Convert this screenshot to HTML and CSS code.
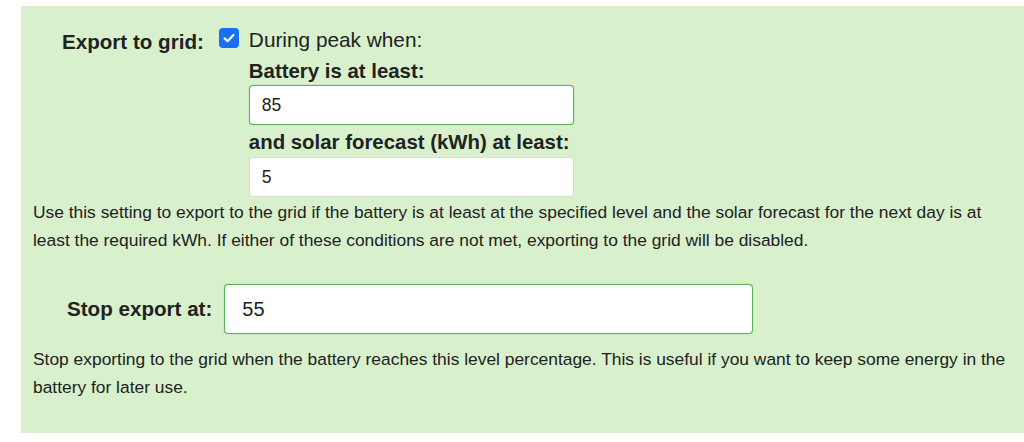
FILE: index.html
```html
<!DOCTYPE html>
<html>
<head>
<meta charset="utf-8">
<link rel="stylesheet" href="styles.css">
</head>
<body>
<div class="panel">
  <div class="row row-export">
    <label class="lbl lbl-export">Export to grid:</label>
    <span class="check">
      <svg viewBox="0 0 20 20" width="20" height="20"><rect x="0" y="0" width="20" height="20" rx="4" fill="#1a6ff2"/><path d="M5.6 10.4 L8.6 13.2 L14.4 7" fill="none" stroke="#fff" stroke-width="2.2" stroke-linecap="round" stroke-linejoin="round"/></svg>
    </span>
    <div class="col">
      <div class="plain">During peak when:</div>
      <div class="sub">Battery is at least:</div>
      <div class="input focus w1">85</div>
      <div class="sub sub2">and solar forecast (kWh) at least:</div>
      <div class="input w1 h2">5</div>
    </div>
  </div>
  <p class="help">Use this setting to export to the grid if the battery is at least at the specified level and the solar forecast for the next day is at least the required kWh. If either of these conditions are not met, exporting to the grid will be disabled.</p>
  <div class="row row-stop">
    <label class="lbl lbl-stop">Stop export at:</label>
    <div class="input focus big">55</div>
  </div>
  <p class="help help2">Stop exporting to the grid when the battery reaches this level percentage. This is useful if you want to keep some energy in the battery for later use.</p>
</div>
</body>
</html>
```
FILE: styles.css
```css
html, body {
  margin: 0;
  padding: 0;
  background: #ffffff;
  overflow: hidden;
}
body {
  font-family: "Liberation Sans", Arial, Helvetica, sans-serif;
  color: #222;
  width: 1024px;
  height: 442px;
}
.panel {
  margin: 6px 0 0 21px;
  width: 1020px;
  height: 427px;
  box-sizing: border-box;
  background: #d8f1cc;
  padding: 22px 0 0 12px;
}
.row {
  display: flex;
  align-items: flex-start;
}
.lbl {
  font-weight: bold;
  font-size: 20.6px;
  line-height: 24px;
}
.lbl-export {
  margin: 2px 0 0 29px;
}
.check {
  display: block;
  margin: 0 0 0 15px;
  width: 20px;
  height: 20px;
}
.check svg { display: block; }
.col {
  margin-left: 10px;
  display: flex;
  flex-direction: column;
}
.plain {
  font-size: 20.8px;
  line-height: 24px;
}
.sub {
  font-size: 20.4px;
  line-height: 24px;
  font-weight: bold;
  margin: 7px 0 2px;
}
.sub2 {
  margin: 5px 0 3px;
}
.input {
  box-sizing: border-box;
  background: #fff;
  border: 1px solid #d9dcd6;
  border-radius: 4px;
  font-size: 17.5px;
  display: flex;
  align-items: center;
  padding-left: 12px;
  color: #1d1d1d;
}
.w1 {
  width: 325px;
  height: 40px;
}
.h2 { height: 40px; }
.focus {
  border: 1px solid #58b45a;
  box-shadow: 0 0 1px 0 #58b45a;
}
.help {
  margin: 1px 0 0;
  font-size: 17.4px;
  line-height: 28px;
  width: 975px;
}
.row-stop {
  margin-top: 30px;
  align-items: center;
}
.lbl-stop {
  margin-left: 34px;
}
.big {
  margin-left: 12px;
  width: 529px;
  height: 50px;
  font-size: 20px;
  padding-left: 17px;
}
.help2 {
  margin-top: 11px;
}
```
